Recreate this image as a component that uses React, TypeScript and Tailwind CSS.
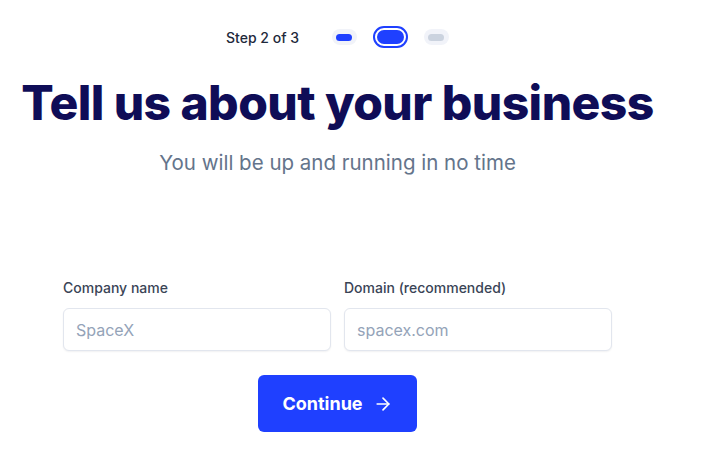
import { ArrowRight } from "lucide-react";

function StepDots() {
  return (
    <div className="flex items-center gap-4">
      <span className="w-[25px] h-4 rounded-full bg-[#f1f3f9] flex items-center justify-center">
        <span className="w-4 h-[7px] rounded-full bg-[#1f40ff]" />
      </span>
      <span className="w-[35px] h-[22px] rounded-full border-2 border-[#1f40ff] bg-white p-[2px] flex">
        <span className="flex-1 rounded-full bg-[#1f40ff]" />
      </span>
      <span className="w-[25px] h-4 rounded-full bg-[#f1f3f9] flex items-center justify-center">
        <span className="w-4 h-[7px] rounded-full bg-[#cbd3df]" />
      </span>
    </div>
  );
}

function Field({ label, placeholder }: { label: string; placeholder: string }) {
  return (
    <label className="flex flex-col w-[268px]">
      <span className="text-[14px] font-medium text-[#3a4456] leading-5">
        {label}
      </span>
      <input
        placeholder={placeholder}
        className="mt-[10px] h-[43px] rounded-md border border-[#e2e6ee] bg-white px-3 text-[16px] text-[#0f172a] placeholder:text-[#94a3b8] shadow-[0_1px_2px_rgba(15,23,42,0.06)] outline-none"
      />
    </label>
  );
}

export default function App() {
  return (
    <div
      className="min-h-screen bg-white"
      style={{ fontFamily: "Inter, 'Noto Sans', sans-serif" }}
    >
      <div className="w-[675px] flex flex-col items-center pt-[26px]">
        <div className="flex items-center gap-[33px]">
          <span className="text-[14px] font-medium text-[#1e293b]">
            Step 2 of 3
          </span>
          <StepDots />
        </div>

        <h1 className="mt-[27px] text-[48px] font-extrabold leading-[56px] tracking-[-0.012em] text-[#0f0d57]">
          Tell us about your business
        </h1>
        <p className="mt-[18px] text-[20.5px] text-[#64748b] leading-7">
          You will be up and running in no time
        </p>

        <div className="mt-[101px] flex gap-[13px]">
          <Field label="Company name" placeholder="SpaceX" />
          <Field label="Domain (recommended)" placeholder="spacex.com" />
        </div>

        <button
          type="button"
          className="mt-6 w-[159px] h-[57px] rounded-md bg-[#1f40ff] text-white text-[18px] font-bold inline-flex items-center justify-center gap-[10px]"
        >
          Continue
          <ArrowRight size={20} strokeWidth={2} />
        </button>
      </div>
    </div>
  );
}
